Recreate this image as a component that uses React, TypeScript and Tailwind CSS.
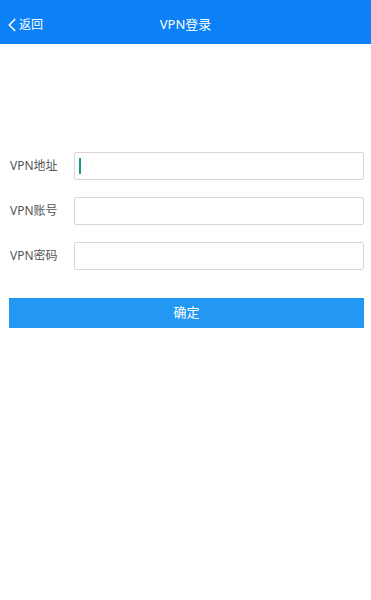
import { ChevronLeft } from "lucide-react";

const font = { fontFamily: '"Noto Sans", "Noto Sans CJK SC", sans-serif' };

function Row({ label, focused }: { label: string; focused?: boolean }) {
  return (
    <div className="flex items-center">
      <span className="block w-[74px] shrink-0 pl-[10px] text-[12px] text-[#555]">{label}</span>
      <div className="flex-1 h-[28px] border border-[#d6d6d6] rounded-[2px] bg-white flex items-center px-[4px]">
        {focused && <span className="w-[2px] h-[16px] bg-[#1a9a8a]" />}
      </div>
    </div>
  );
}

export default function App() {
  return (
    <div className="w-[371px] h-[600px] bg-white" style={font}>
      {/* Header */}
      <div className="relative h-[44px] pt-[6px] bg-[#0c80f6] flex items-center justify-center">
        <div className="absolute left-[1px] top-[6px] bottom-0 flex items-center text-white">
          <ChevronLeft size={22} strokeWidth={1.8} />
          <span className="text-[12px] -ml-[4px]">返回</span>
        </div>
        <span className="text-[13px] text-white">VPN登录</span>
      </div>

      {/* Form */}
      <div className="pt-[108px] pr-[7px] flex flex-col gap-[17px]">
        <Row label="VPN地址" focused />
        <Row label="VPN账号" />
        <Row label="VPN密码" />
      </div>

      <div className="px-[9px] pt-[28px] pr-[7px]">
        <button className="w-full h-[30px] bg-[#2398f2] text-white text-[13px]">确定</button>
      </div>
    </div>
  );
}
